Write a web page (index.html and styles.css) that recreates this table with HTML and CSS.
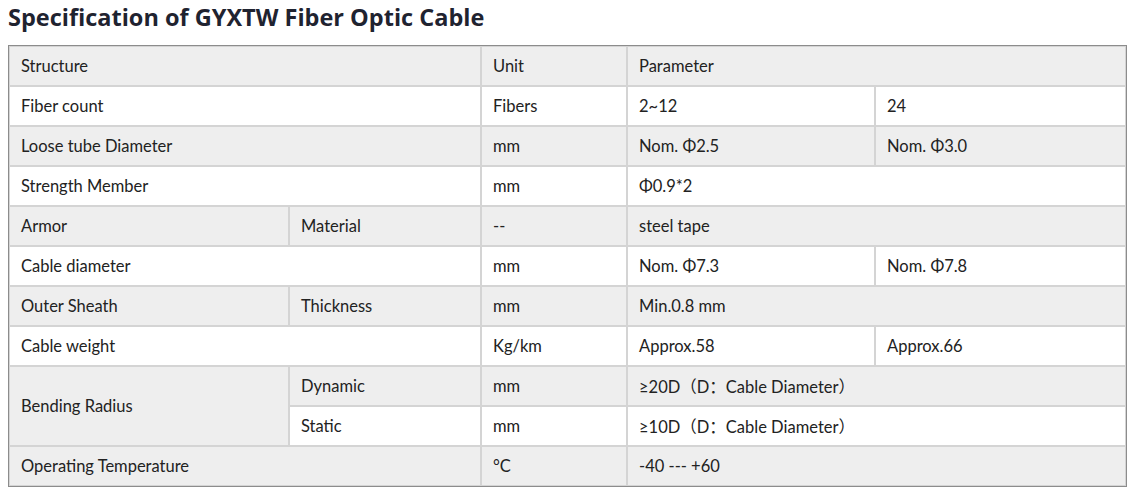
FILE: index.html
```html
<!DOCTYPE html>
<html>
<head>
<meta charset="utf-8">
<link rel="stylesheet" href="styles.css">
</head>
<body>
<h2 class="title">Specification of GYXTW Fiber Optic Cable</h2>
<table class="spec">
<colgroup>
<col class="c1"><col class="c2"><col class="c3"><col class="c4"><col class="c5">
</colgroup>
<tr><td colspan="2">Structure</td><td>Unit</td><td colspan="2">Parameter</td></tr>
<tr><td colspan="2">Fiber count</td><td>Fibers</td><td>2~12</td><td>24</td></tr>
<tr><td colspan="2">Loose tube Diameter</td><td>mm</td><td>Nom. Φ2.5</td><td>Nom. Φ3.0</td></tr>
<tr><td colspan="2">Strength Member</td><td>mm</td><td colspan="2">Φ0.9*2</td></tr>
<tr><td>Armor</td><td>Material</td><td>--</td><td colspan="2">steel tape</td></tr>
<tr><td colspan="2">Cable diameter</td><td>mm</td><td>Nom. Φ7.3</td><td>Nom. Φ7.8</td></tr>
<tr><td>Outer Sheath</td><td>Thickness</td><td>mm</td><td colspan="2">Min.0.8 mm</td></tr>
<tr><td colspan="2">Cable weight</td><td>Kg/km</td><td>Approx.58</td><td>Approx.66</td></tr>
<tr><td rowspan="2" class="bend">Bending Radius</td><td>Dynamic</td><td>mm</td><td colspan="2">≥20D（D：Cable Diameter）</td></tr>
<tr><td>Static</td><td>mm</td><td colspan="2">≥10D（D：Cable Diameter）</td></tr>
<tr><td colspan="2">Operating Temperature</td><td>°C</td><td colspan="2">-40 --- +60</td></tr>
</table>
</body>
</html>
```
FILE: styles.css
```css
body {
  margin: 8px;
  background: #ffffff;
  font-family: "Lato", "Noto Sans CJK SC", sans-serif;
  color: #222222;
}
.title {
  margin: -1px 0 12px 0;
  height: 26px;
  font-family: "Open Sans", sans-serif;
  font-weight: 700;
  font-size: 23.5px;
  line-height: 20px;
  color: #1f2330;
}
.spec {
  width: 1119px;
  border-collapse: separate;
  border-spacing: 0;
  border: 1px solid #8c8c8c;
  table-layout: fixed;
}
.c1 { width: 280px; }
.c2 { width: 192px; }
.c3 { width: 146px; }
.c4 { width: 248px; }
.c5 { width: 251px; }
.spec td {
  border: 1px solid #d4d4d4;
  padding: 0 0 0 11px;
  box-sizing: border-box;
  height: 40px;
  font-size: 16.5px;
  color: #222;
  vertical-align: middle;
}
.spec tr:nth-child(odd) td { background: #eeeeee; }
.spec tr:nth-child(even) td { background: #ffffff; }
.spec td.bend { background: #eeeeee; }
```
